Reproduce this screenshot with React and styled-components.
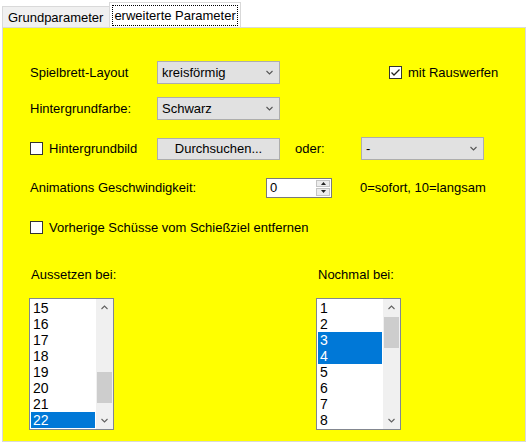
import React from "react";
import styled, { createGlobalStyle } from "styled-components";

const GlobalStyle = createGlobalStyle`
  body {
    margin: 0;
    background: #ffffff;
    font-family: "Liberation Sans", Arial, sans-serif;
    font-size: 13px;
    color: #000;
  }
`;

const Window = styled.div`
  width: 528px;
  height: 445px;
  box-sizing: border-box;
  display: flex;
  flex-direction: column;
`;

const TabStrip = styled.div`
  height: 27px;
  display: flex;
  align-items: flex-end;
  padding-left: 2px;
`;

const Tab = styled.div`
  height: 21px;
  box-sizing: border-box;
  padding: 0 6px 0 5px;
  display: flex;
  align-items: center;
  background: #f0f0f0;
  border: 1px solid #d9d9d9;
  border-bottom: none;
  margin-right: -1px;
`;

const ActiveTab = styled.div`
  height: 25px;
  box-sizing: border-box;
  padding: 2px 2px 1px 2px;
  display: flex;
  background: #ffffff;
  border: 1px solid #d9d9d9;
  border-bottom: none;
`;

const FocusText = styled.span`
  border: 1px dotted #000;
  padding: 0 1px;
  display: flex;
  align-items: center;
`;

const Page = styled.div`
  margin-left: 2px;
  width: 524px;
  height: 415px;
  box-sizing: border-box;
  border: 1px solid #d9d9d9;
  background: #ffff00;
  padding: 33px 0 0 27px;
`;

const Row = styled.div`
  display: flex;
  align-items: center;
  height: ${(p) => p.$h || 23}px;
  margin-top: ${(p) => p.$top || 0}px;
`;

const Label = styled.div`
  width: ${(p) => p.$w}px;
  margin-left: ${(p) => p.$ml || 0}px;
  flex-shrink: 0;
  white-space: nowrap;
`;

const SelectBox = styled.div`
  width: 123px;
  height: 23px;
  box-sizing: border-box;
  background: #e1e1e1;
  border: 1px solid #adadad;
  display: flex;
  align-items: center;
  justify-content: space-between;
  padding: 0 6px 0 4px;
  flex-shrink: 0;
`;

const Button = styled.div`
  width: 123px;
  height: 22px;
  box-sizing: border-box;
  background: #e1e1e1;
  border: 1px solid #adadad;
  display: flex;
  align-items: center;
  justify-content: center;
  flex-shrink: 0;
`;

const CheckLabel = styled.label`
  display: flex;
  align-items: center;
  gap: 6px;
  white-space: nowrap;
  width: ${(p) => (p.$w ? `${p.$w}px` : "auto")};
  margin-left: ${(p) => p.$ml || 0}px;
  flex-shrink: 0;
`;

const Box = styled.span`
  width: 13px;
  height: 13px;
  box-sizing: border-box;
  border: 1px solid #333;
  background: #fff;
  display: flex;
  align-items: center;
  justify-content: center;
`;

const SpinBox = styled.div`
  width: 66px;
  height: 20px;
  box-sizing: border-box;
  background: #fff;
  border: 1px solid #7a7a7a;
  display: flex;
  align-items: stretch;
  flex-shrink: 0;
`;

const SpinValue = styled.div`
  flex: 1;
  padding-left: 3px;
  display: flex;
  align-items: center;
`;

const SpinButtons = styled.div`
  width: 14px;
  display: flex;
  flex-direction: column;
  gap: 1px;
  padding: 1px 1px 1px 0;
`;

const SpinButton = styled.div`
  flex: 1;
  background: #ececec;
  border: 1px solid #c4c4c4;
  display: flex;
  align-items: center;
  justify-content: center;
`;

const ListsRow = styled.div`
  display: flex;
  margin-top: ${(p) => p.$top}px;
`;

const ListColumn = styled.div`
  width: ${(p) => p.$w}px;
  display: flex;
  flex-direction: column;
  flex-shrink: 0;
`;

const ListTitle = styled.div`
  padding-left: 1px;
  height: 15px;
  line-height: 15px;
`;

const ListBox = styled.div`
  margin: 16px 0 0 -1px;
  width: 85px;
  height: 132px;
  box-sizing: border-box;
  border: 1px solid #828790;
  background: #fff;
  display: flex;
`;

const Items = styled.div`
  flex: 1;
  padding: 1px 1px 0 1px;
  overflow: hidden;
`;

const Item = styled.div`
  height: 16px;
  line-height: 16px;
  padding-left: 2px;
  font-size: 14px;
  background: ${(p) => (p.$sel ? "#0078d7" : "transparent")};
  color: ${(p) => (p.$sel ? "#fff" : "#000")};
`;

const ScrollBar = styled.div`
  width: 17px;
  background: #f0f0f0;
  display: flex;
  flex-direction: column;
`;

const ScrollArrow = styled.div`
  height: 17px;
  display: flex;
  align-items: center;
  justify-content: center;
`;

const Track = styled.div`
  flex: 1;
`;

const Thumb = styled.div`
  margin: ${(p) => p.$offset}px auto 0;
  width: 15px;
  height: 31px;
  background: #cdcdcd;
`;

const Chevron = ({ up, color = "#606060", w = 7 }) => (
  <svg width={w} height="5" viewBox="0 0 7 5">
    <polyline
      points={up ? "0.5,4 3.5,1 6.5,4" : "0.5,1 3.5,4 6.5,1"}
      fill="none"
      stroke={color}
      strokeWidth="1.1"
    />
  </svg>
);

const Tri = ({ up }) => (
  <svg width="5" height="3" viewBox="0 0 5 3">
    <polygon points={up ? "0,3 2.5,0 5,3" : "0,0 2.5,3 5,0"} fill="#222" />
  </svg>
);

function CheckBox({ checked }) {
  return (
    <Box>
      {checked && (
        <svg width="11" height="11" viewBox="0 0 11 11">
          <polyline points="1.5,5.5 4,8 9.5,2.5" fill="none" stroke="#222" strokeWidth="1.3" />
        </svg>
      )}
    </Box>
  );
}

function Select({ value }) {
  return (
    <SelectBox>
      <span>{value}</span>
      <Chevron color="#555" />
    </SelectBox>
  );
}

function List({ items, selected, thumb }) {
  return (
    <ListBox>
      <Items>
        {items.map((n) => (
          <Item key={n} $sel={selected.includes(n)}>
            {n}
          </Item>
        ))}
      </Items>
      <ScrollBar>
        <ScrollArrow>
          <Chevron up />
        </ScrollArrow>
        <Track>
          <Thumb $offset={thumb} />
        </Track>
        <ScrollArrow>
          <Chevron />
        </ScrollArrow>
      </ScrollBar>
    </ListBox>
  );
}

export default function App() {
  return (
    <Window>
      <GlobalStyle />
      <TabStrip>
        <Tab>Grundparameter</Tab>
        <ActiveTab>
          <FocusText>erweiterte Parameter</FocusText>
        </ActiveTab>
      </TabStrip>
      <Page>
        <Row>
          <Label $w={127}>Spielbrett-Layout</Label>
          <Select value="kreisförmig" />
          <CheckLabel $ml={109}>
            <CheckBox checked />
            mit Rauswerfen
          </CheckLabel>
        </Row>
        <Row $top={13}>
          <Label $w={127}>Hintergrundfarbe:</Label>
          <Select value="Schwarz" />
        </Row>
        <Row $top={17}>
          <CheckLabel $w={127}>
            <CheckBox />
            Hintergrundbild
          </CheckLabel>
          <Button>Durchsuchen...</Button>
          <Label $w={66} $ml={15}>oder:</Label>
          <Select value="-" />
        </Row>
        <Row $top={17} $h={21}>
          <Label $w={236}>Animations Geschwindigkeit:</Label>
          <SpinBox>
            <SpinValue>0</SpinValue>
            <SpinButtons>
              <SpinButton>
                <Tri up />
              </SpinButton>
              <SpinButton>
                <Tri />
              </SpinButton>
            </SpinButtons>
          </SpinBox>
          <Label $w={140} $ml={28}>0=sofort, 10=langsam</Label>
        </Row>
        <Row $top={21} $h={17}>
          <CheckLabel>
            <CheckBox />
            Vorherige Schüsse vom Schießziel entfernen
          </CheckLabel>
        </Row>
        <ListsRow $top={31}>
          <ListColumn $w={287}>
            <ListTitle>Aussetzen bei:</ListTitle>
            <List items={[15, 16, 17, 18, 19, 20, 21, 22]} selected={[22]} thumb={56} />
          </ListColumn>
          <ListColumn $w={100}>
            <ListTitle>Nochmal bei:</ListTitle>
            <List items={[1, 2, 3, 4, 5, 6, 7, 8]} selected={[3, 4]} thumb={1} />
          </ListColumn>
        </ListsRow>
      </Page>
    </Window>
  );
}
